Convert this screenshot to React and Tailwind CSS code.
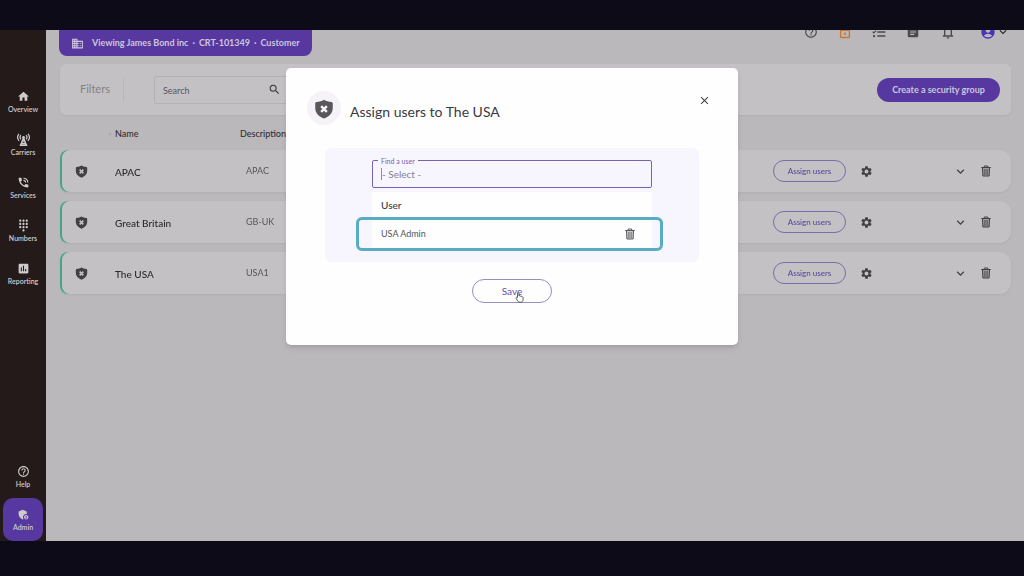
import React from 'react'
import {
    MdHome,
    MdPhoneInTalk,
    MdDialpad,
    MdAssessment,
    MdHelpOutline,
    MdAdminPanelSettings,
    MdDomain,
    MdSearch,
    MdSettings,
    MdClose,
    MdExpandMore,
    MdNotificationsNone,
    MdAccountCircle,
    MdArticle,
} from 'react-icons/md'

const TowerIcon = ({ size }) => (
    <svg width={size} height={size} viewBox="0 0 24 24" fill="none" stroke="currentColor" aria-hidden="true">
        <circle cx="12" cy="8" r="2.600" fill="currentColor" stroke="none" />
        <path d="M12 9L6.500 23M12 9l5.500 14M9.500 15h5M8 19.500h8M5 22.500h14" strokeWidth="2.600" />
        <path d="M7.300 4.200a5.500 5.500 0 0 0 0 7.600M16.700 4.200a5.500 5.500 0 0 1 0 7.600M3.800 1.500a10 10 0 0 0 0 13M20.200 1.500a10 10 0 0 1 0 13" strokeWidth="2.200" />
    </svg>
)

const LockIcon = ({ size }) => (
    <svg width={size} height={size} viewBox="0 0 24 24" fill="none" stroke="currentColor" aria-hidden="true">
        <path d="M8 9V6a4 4 0 0 1 8 0v3" strokeWidth="2" />
        <rect x="4.500" y="9" width="15" height="12.500" rx="1" strokeWidth="2.400" />
        <circle cx="12" cy="15" r="2" fill="currentColor" stroke="none" />
    </svg>
)

const ChecklistIcon = ({ size }) => (
    <svg width={size} height={size} viewBox="0 0 24 24" fill="none" stroke="currentColor" aria-hidden="true">
        <path d="M9 5h14M9 12h14M9 19h14" strokeWidth="2.600" />
        <path d="M1 11.500l2 2 4-4M1 4.500l2 2 4-4" strokeWidth="2" />
        <circle cx="3.500" cy="19" r="2" fill="currentColor" stroke="none" />
    </svg>
)

const ShieldIcon = ({ size, mark }) => (
    <svg width={size} height={size} viewBox="0 0 24 24" fill="currentColor" aria-hidden="true">
        <path d="M12 1c2.600 1.600 5.400 2.500 9 2.700 1 .1 1.500.8 1.500 1.700v5.600c0 5.700-4.200 10-10.500 12.500C5.700 21 1.500 16.700 1.500 11V5.400c0-.9.5-1.600 1.500-1.700C6.600 3.500 9.400 2.600 12 1z" />
        <path d="M8.600 8.600l6.800 6.800m0-6.800l-6.800 6.800" stroke={mark} strokeWidth="3" fill="none" />
    </svg>
)

const TrashIcon = ({ size }) => (
    <svg width={size} height={size} viewBox="0 0 24 24" fill="none" stroke="currentColor" aria-hidden="true">
        <path d="M2.500 5h19M8.500 4.500V2h7v2.500" strokeWidth="2" />
        <path d="M5 6l.8 16h12.400L19 6" strokeWidth="2" fill="currentColor" fillOpacity="0.3" />
        <path d="M9.300 8v12M12 8v12M14.700 8v12" strokeWidth="1.200" />
    </svg>
)

const navItems = [
    { label: 'Overview', icon: MdHome },
    { label: 'Carriers', icon: TowerIcon },
    { label: 'Services', icon: MdPhoneInTalk },
    { label: 'Numbers', icon: MdDialpad },
    { label: 'Reporting', icon: MdAssessment },
]

const groups = [
    { name: 'APAC', description: 'APAC' },
    { name: 'Great Britain', description: 'GB-UK' },
    { name: 'The USA', description: 'USA1' },
]

const NavItem = ({ label, icon: Icon, active }) => (
    <a
        href="#"
        className={`flex h-[43px] w-10 flex-col items-center justify-center gap-[2px] text-[7px] leading-[9px] font-semibold text-[#cfcbcc] ${active ? 'rounded-[10px] bg-[#5638a0]' : ''}`}
    >
        <Icon size={13} />
        {label}
    </a>
)

const Sidebar = () => (
    <nav className="flex w-[46px] shrink-0 flex-col items-center bg-[#231a19] pt-[50px]">
        {navItems.map((item) => <NavItem key={item.label} {...item} />)}
        <div className="mt-auto">
            <NavItem label="Help" icon={MdHelpOutline} />
            <NavItem label="Admin" icon={MdAdminPanelSettings} active />
        </div>
    </nav>
)

const Header = () => (
    <header className="flex items-start justify-between overflow-hidden pl-[13px] pr-[14px]">
        <div className="flex h-[26px] items-center gap-2 rounded-b-lg bg-[#5638a0] px-3 text-[9px] font-bold text-[#cdc6dc]">
            <MdDomain size={13} />
            <p className="flex gap-1">
                <span>Viewing James Bond inc</span>
                <span>·</span>
                <span>CRT-101349</span>
                <span>·</span>
                <span>Customer</span>
            </p>
        </div>
        <div className="-mt-[6px] flex h-4 items-center gap-5 text-[#4b494c]">
            <button aria-label="Help"><MdHelpOutline size={14} /></button>
            <button aria-label="Security" className="text-[#c87a35]"><LockIcon size={14} /></button>
            <button aria-label="Tasks"><ChecklistIcon size={14} /></button>
            <button aria-label="Documents"><MdArticle size={14} /></button>
            <button aria-label="Notifications"><MdNotificationsNone size={16} /></button>
            <button aria-label="Account" className="ml-1 flex items-center text-[#4a35b5]">
                <MdAccountCircle size={16} />
                <MdExpandMore size={14} className="text-[#222]" />
            </button>
        </div>
    </header>
)

const Filters = () => (
    <section className="mt-2 flex h-[51px] items-center rounded-md bg-[#c4c1c4] pl-5 pr-[11px] shadow-xs">
        <h2 className="w-11 border-r border-[#b9b6b9] py-1 text-[11px] text-[#838084]">Filters</h2>
        <label className="ml-[30px] flex h-7 w-[140px] items-center rounded-xs border border-[#b4b1b4] px-2">
            <input type="search" aria-label="Search" placeholder="Search" className="w-full min-w-0 pt-[2px] text-[9px] outline-none placeholder:text-[#58555a]" />
            <MdSearch size={13} className="mr-1 shrink-0 text-[#3c3a3d]" />
        </label>
        <button className="ml-auto h-6 w-[123px] rounded-full bg-[#5638a0] text-[9px] font-bold text-[#cdc6dc]">
            Create a security group
        </button>
    </section>
)

const GroupTable = () => (
    <table className="w-full table-fixed border-separate border-spacing-x-0 border-spacing-y-[9px] text-left">
        <thead>
            <tr className="h-[17px] text-[9px] leading-[15px] text-[#2f2d30]">
                <td className="w-[55px] pt-[2px] pr-[3px] text-right text-[#a3a0a3]">◦</td>
                <th className="w-[125px] pt-[2px] font-medium">Name</th>
                <th className="pt-[2px] font-medium">Description</th>
                <td className="w-[87px]"></td>
                <td className="w-[93px]"></td>
                <td className="w-[27px]"></td>
                <td className="w-[31px]"></td>
            </tr>
        </thead>
        <tbody>
            {groups.map((group) => (
                <tr key={group.name} className="h-[42px] drop-shadow-xs *:bg-[#c4c1c4]">
                    <td className="rounded-l-lg pl-[15px] text-[#414043] shadow-[inset_2px_0_0_#46a583]">
                        <ShieldIcon size={13} mark="#c4c1c4" />
                    </td>
                    <td className="pt-[2px] text-[10px] font-medium text-[#2a282b]">{group.name}</td>
                    <td className="pl-[6px] text-[9px] text-[#58555a]">{group.description}</td>
                    <td>
                        <button className="block h-[22px] w-[73px] rounded-full border border-[#7a6da8] text-[8px] font-medium text-[#5a489c]">
                            Assign users
                        </button>
                    </td>
                    <td className="text-[#414043]">
                        <button aria-label={`Settings for ${group.name}`} className="block"><MdSettings size={13} /></button>
                    </td>
                    <td className="text-[#414043]">
                        <button aria-label={`Expand ${group.name}`} className="block"><MdExpandMore size={15} /></button>
                    </td>
                    <td className="rounded-r-xl text-[#414043]">
                        <button aria-label={`Delete ${group.name}`} className="block"><TrashIcon size={12} /></button>
                    </td>
                </tr>
            ))}
        </tbody>
    </table>
)

const HandCursor = () => (
    <svg width="9" height="11" viewBox="0 0 18 22" className="absolute top-3 left-[42px]" aria-hidden="true">
        <path
            d="M5 11V3c0-2 3-2 3 0v5c1-1 3-.6 3 .6 1-.8 2.600-.2 2.700 1 1-.6 2.500 0 2.500 1.600V15c0 3-2 5.500-5.500 5.500S6 19 4.500 16.500L2 12.500c-.8-1.600 1.200-2.800 3-1.500z"
            fill="#fff"
            stroke="#4a484d"
            strokeWidth="1.800"
        />
    </svg>
)

const AssignUsersModal = () => (
    <div role="dialog" aria-labelledby="assign-title" className="w-full max-w-[452px] rounded-[5px] bg-[#fefefe] px-[39px] pb-[42px] shadow-md">
        <div className="-mr-3 -ml-[18px] flex h-20 items-center">
            <span className="grid size-[34px] place-items-center rounded-full bg-[#f5f3f8] pt-px text-[#58575a]">
                <ShieldIcon size={20} mark="#f5f3f8" />
            </span>
            <h1 id="assign-title" className="ml-[9px] pt-2 text-sm text-[#3b393d]">Assign users to The USA</h1>
            <button aria-label="Close" className="mb-4 ml-auto text-[#444]"><MdClose size={13} /></button>
        </div>

        <div className="rounded-md bg-[#f7f6fe] px-[47px] pt-3 pb-[13px]">
            <div className="relative">
                <label htmlFor="find-user" className="absolute -top-[3px] left-[6px] bg-[#f7f6fe] px-[3px] text-[7px] leading-[9px] text-[#7763ad]">Find a user</label>
                <input
                    id="find-user"
                    type="text"
                    placeholder="- Select -"
                    className="block h-7 w-full rounded-xs border border-[#7763ad] px-[9px] text-[10px] outline-none placeholder:text-[#85818e]"
                />
                <span className="absolute top-2 left-[9px] h-3 w-px bg-[#8e8a98]" />
            </div>

            <table className="mt-1 w-full bg-[#fefefe] text-left">
                <thead>
                    <tr className="h-[27px]">
                        <th className="pl-[9px] text-[10px] font-medium text-[#3b393d]">User</th>
                        <td></td>
                    </tr>
                </thead>
                <tbody>
                    <tr className="relative h-[30px]">
                        <td className="pl-[9px] text-[9px] text-[#56535a]">
                            USA Admin
                            <span className="pointer-events-none absolute -inset-y-[2px] right-[-11px] left-[-16px] rounded-md border-3 border-[#58adc3]" />
                        </td>
                        <td className="w-7 text-[#58575a]">
                            <button aria-label="Remove USA Admin" className="block"><TrashIcon size={12} /></button>
                        </td>
                    </tr>
                </tbody>
            </table>
        </div>

        <div className="mt-[17px] flex justify-center">
            <button className="relative h-6 w-20 rounded-full border border-[#9b8cc0] text-[10px] text-[#6650a8]">
                Save
                <HandCursor />
            </button>
        </div>
    </div>
)

const App = () => {
    return (
        <div className="relative flex min-h-screen flex-col bg-[#0d0b17] font-['Lato','Liberation_Sans',sans-serif]">
            <div className="mt-[30px] mb-[35px] flex flex-1 bg-[#bbb8bb]">
                <Sidebar />
                <main className="min-w-0 flex-1">
                    <Header />
                    <div className="pl-[14px] pr-[13px]">
                        <Filters />
                        <GroupTable />
                    </div>
                </main>
            </div>
            <div className="absolute inset-0 flex items-start justify-center pt-[68px]">
                <AssignUsersModal />
            </div>
        </div>
    )
}

export default App
